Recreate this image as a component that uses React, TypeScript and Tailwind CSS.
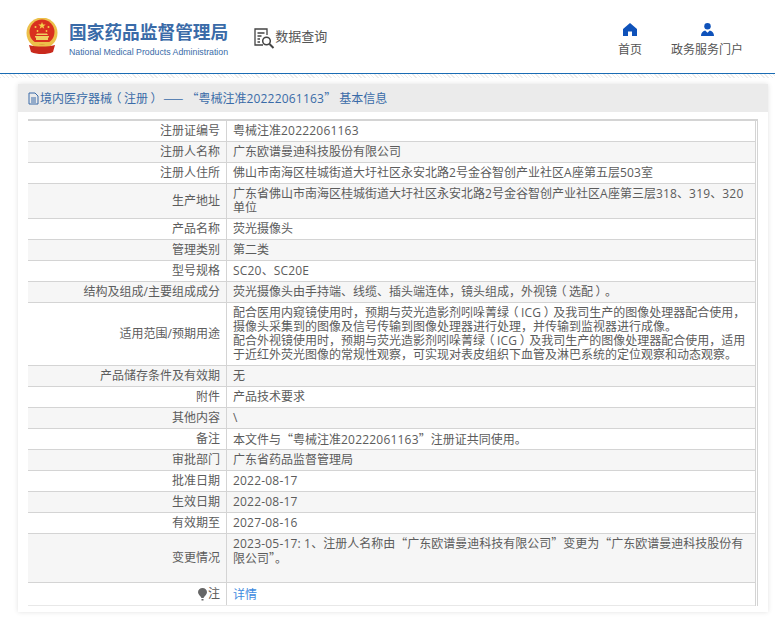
const font = "font-['Open_Sans','Noto_Sans_CJK_SC',sans-serif]";

type Row = { label: string; lines: string[]; h: string; odd: boolean; link?: boolean; note?: boolean };

const rows: Row[] = [
  { label: "注册证编号", lines: ["粤械注准20222061163"], h: "h-[21px]", odd: false },
  { label: "注册人名称", lines: ["广东欧谱曼迪科技股份有限公司"], h: "h-[21px]", odd: true },
  { label: "注册人住所", lines: ["佛山市南海区桂城街道大圩社区永安北路2号金谷智创产业社区A座第五层503室"], h: "h-[21px]", odd: false },
  { label: "生产地址", lines: ["广东省佛山市南海区桂城街道大圩社区永安北路2号金谷智创产业社区A座第三层318、319、320", "单位"], h: "h-[35px]", odd: true },
  { label: "产品名称", lines: ["荧光摄像头"], h: "h-[21px]", odd: false },
  { label: "管理类别", lines: ["第二类"], h: "h-[21px]", odd: true },
  { label: "型号规格", lines: ["SC20、SC20E"], h: "h-[21px]", odd: false },
  { label: "结构及组成/主要组成成分", lines: ["荧光摄像头由手持端、线缆、插头端连体，镜头组成，外视镜（选配）。"], h: "h-[21px]", odd: true },
  { label: "适用范围/预期用途", lines: ["配合医用内窥镜使用时，预期与荧光造影剂吲哚菁绿（ICG）及我司生产的图像处理器配合使用，", "摄像头采集到的图像及信号传输到图像处理器进行处理，并传输到监视器进行成像。", "配合外视镜使用时，预期与荧光造影剂吲哚菁绿（ICG）及我司生产的图像处理器配合使用，适用", "于近红外荧光图像的常规性观察，可实现对表皮组织下血管及淋巴系统的定位观察和动态观察。"], h: "h-[63px]", odd: false },
  { label: "产品储存条件及有效期", lines: ["无"], h: "h-[21px]", odd: true },
  { label: "附件", lines: ["产品技术要求"], h: "h-[21px]", odd: false },
  { label: "其他内容", lines: ["\\"], h: "h-[21px]", odd: true },
  { label: "备注", lines: ["本文件与“粤械注准20222061163”注册证共同使用。"], h: "h-[21px]", odd: false },
  { label: "审批部门", lines: ["广东省药品监督管理局"], h: "h-[21px]", odd: true },
  { label: "批准日期", lines: ["2022-08-17"], h: "h-[21px]", odd: false },
  { label: "生效日期", lines: ["2022-08-17"], h: "h-[21px]", odd: true },
  { label: "有效期至", lines: ["2027-08-16"], h: "h-[21px]", odd: false },
  { label: "变更情况", lines: ["2023-05-17: 1、注册人名称由“广东欧谱曼迪科技有限公司”变更为“广东欧谱曼迪科技股份有", "限公司”。", "\u00a0"], h: "h-[49px]", odd: true },
  { label: "注", lines: ["详情"], h: "h-[23px]", odd: false, link: true, note: true },
];

// Curly quotes and em dashes take the full-width CJK glyph; brackets are centred in their cell; Latin runs are a touch wider.
function T({ children }: { children: string }) {
  const parts = children.split(/([“”—]+|（|）|[A-Za-z0-9\-:]+)/);
  return (
    <>
      {parts.map((p, i) => {
        if (i % 2 === 0) return <span key={i}>{p}</span>;
        if (p === "（" || p === "）") return <span key={i} className="inline-block w-[12px] text-center [font-feature-settings:'palt']">{p}</span>;
        if (/^[“”—]/.test(p)) return <span key={i} className="font-['Noto_Sans_CJK_SC',sans-serif]">{p}</span>;
        return <span key={i} className="tracking-[0.2px]">{p}</span>;
      })}
    </>
  );
}

function Emblem() {
  return (
    <svg width="32" height="36" viewBox="0 0 32 36">
      <circle cx="16" cy="15" r="15.500" fill="#ecc04a" />
      <circle cx="16" cy="14" r="12.500" fill="#d9301f" />
      <path d="M16 4l1 2.600h2.700l-2.200 1.600.8 2.600-2.300-1.600-2.300 1.600.8-2.600-2.200-1.600H15z" fill="#f4d04a" />
      <circle cx="9.500" cy="9" r="1" fill="#f4d04a" />
      <circle cx="22.500" cy="9" r="1" fill="#f4d04a" />
      <circle cx="11.500" cy="13" r="0.900" fill="#f4d04a" />
      <circle cx="20.500" cy="13" r="0.900" fill="#f4d04a" />
      <path d="M11 15.500h10L22 17H10zM9 18h14v1.500h-1V22H10v-2.500H9z" fill="#f0d060" />
      <path d="M3 27c4 1 8 1.500 13 1.500S25 28 29 27l-2 7c-3 1.500-7 2-11 2s-8-.5-11-2z" fill="#c92a1d" />
      <rect x="6" y="24" width="20" height="2.500" fill="#ecc04a" />
    </svg>
  );
}

export default function App() {
  return (
    <div className={`${font} w-[775px] h-[618px] overflow-hidden bg-white`}>
      <header className="h-[74px] border-b border-[#1a6cb4] flex items-start">
        <div className="ml-[26px] mt-[18px]"><Emblem /></div>
        <div className="ml-[11px] mt-[21px] flex flex-col whitespace-nowrap">
          <span className="text-[17.700px] leading-[22px] font-bold text-[#3a6ba8]">国家药品监督管理局</span>
          <span className="text-[8.750px] leading-[12px] mt-[3px] text-[#3a6ba8] font-['Liberation_Sans',sans-serif]">National Medical Products Administration</span>
        </div>
        <div className="ml-[26px] mt-[28px] flex items-start">
          <svg width="21" height="21" viewBox="0 0 21 21" fill="none" stroke="#444" strokeWidth="1.300">
            <path d="M9 17H1V1h12v6" />
            <path d="M3.500 5h7M3.500 8h4M3.500 11h2.500M3.500 14h2.500" />
            <circle cx="12.500" cy="13" r="3.800" strokeWidth="1.500" />
            <path d="M15.500 16l4 4" strokeWidth="2" />
          </svg>
          <span className="text-[13px] leading-[17px] text-[#555] whitespace-nowrap">数据查询</span>
        </div>
        <nav className="ml-auto flex mt-[23px] pr-[32px]">
          <div className="flex flex-col items-center w-[24px] mr-[29px]">
            <svg width="14" height="13" viewBox="0 0 14 13" fill="#0f52ba"><path d="M7 0L0 6v7h5V8.500h4V13h5V6z" /></svg>
            <span className="text-[12px] leading-[16px] mt-[6px] text-[#555] whitespace-nowrap">首页</span>
          </div>
          <div className="flex flex-col items-center w-[72px]">
            <svg width="13" height="13" viewBox="0 0 14 14" fill="#0f52ba"><circle cx="7" cy="3.500" r="3.500" /><path d="M0 14c0-3.500 1.500-5 4.500-6L7 10.500 9.500 8c3 1 4.500 2.500 4.500 6z" /></svg>
            <span className="text-[12px] leading-[16px] mt-[6px] text-[#555] whitespace-nowrap">政务服务门户</span>
          </div>
        </nav>
      </header>
      <div className="h-[4px] bg-[repeating-linear-gradient(45deg,#ececec_0,#ececec_1px,#ffffff_1px,#ffffff_3px)]" />
      <div className="h-[6px]" />
      <main className="ml-[18px] w-[750px] h-[528px] bg-white shadow-[0_0_5px_rgba(0,0,0,0.12)]">
        <div className="h-[28px] bg-[#ebebeb] pl-[10px] flex items-center text-[12px] text-[#3a6ba8] whitespace-pre">
          <svg width="11" height="13" viewBox="0 0 11 13" fill="none" stroke="#3a6ba8" strokeWidth="1" className="mr-[1px]"><path d="M1 1h6l3 3v8H1zM3 6h5M3 8h5M3 10h5" /></svg>
          <span><T>{"境内医疗器械（注册） —— “粤械注准20222061163” 基本信息"}</T></span>
        </div>
        <div className="mx-[10px] mt-[7px] w-[730px] border-t-2 border-r border-[#d4d4d4] text-[12px] text-[#5c5c5c]">
          <div className="mr-[1px] border-r border-[#d4d4d4]">
            {rows.map((r) => (
              <div key={r.label} className={`flex ${r.h} border-b ${r.note ? "border-[#e8e8e8]" : "border-[#d4d4d4]"} ${r.odd ? "bg-[#f6f6f6]" : "bg-white"}`}>
                <div className="w-[199px] shrink-0 flex items-center justify-end pr-[6px] border-r border-[#d4d4d4] whitespace-nowrap">
                  {r.note && (
                    <svg width="9" height="13" viewBox="0 0 9 13" fill="#666" className="mr-[1px]">
                      <path d="M4.500 0C7 0 9 1.800 9 4.200 9 6.500 6.500 8 5.500 10h-2C2.500 8 0 6.500 0 4.200 0 1.800 2 0 4.500 0zM3.500 11h2v1.500h-2z" />
                    </svg>
                  )}
                  <T>{r.label}</T>
                </div>
                <div className={`flex-1 flex flex-col justify-center pl-[6px] leading-[14px] whitespace-nowrap ${r.note ? "pt-[2px]" : ""}`}>
                  {r.lines.map((l, i) => (
                    <div key={i} className={r.link ? "text-[#3d8ae0]" : ""}><T>{l}</T></div>
                  ))}
                </div>
              </div>
            ))}
          </div>
        </div>
      </main>
    </div>
  );
}
